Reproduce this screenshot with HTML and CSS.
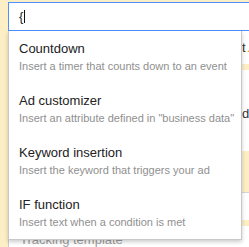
FILE: index.html
```html
<!DOCTYPE html>
<html lang="en">
<head>
    <meta charset="UTF-8">
    <meta name="viewport" content="width=device-width, initial-scale=1.0">
    <title>Ad text insert</title>
    <link rel="stylesheet" href="styles.css">
</head>
<body>

    <div class="page">
        <div class="editor">
            <div class="field-input"><span class="typed">{</span><span class="caret"></span></div>

            <!-- form rows partly hidden behind the menu -->
            <div class="row row-headline"><span class="peek">t</span><span class="peek-dot">.</span></div>
            <div class="band"></div>
            <div class="row row-desc"><span class="peek">d.</span></div>
            <div class="band band-tall"></div>
            <div class="row row-path"></div>
            <div class="band"></div>
            <div class="row row-tracking">
                <div class="tracking">Tracking template</div>
            </div>
        </div>

        <ul class="suggest">
            <li class="suggest-item">
                <div class="suggest-title">Countdown</div>
                <div class="suggest-desc">Insert a timer that counts down to an event</div>
            </li>
            <li class="suggest-item">
                <div class="suggest-title">Ad customizer</div>
                <div class="suggest-desc">Insert an attribute defined in "business data"</div>
            </li>
            <li class="suggest-item">
                <div class="suggest-title">Keyword insertion</div>
                <div class="suggest-desc">Insert the keyword that triggers your ad</div>
            </li>
            <li class="suggest-item">
                <div class="suggest-title">IF function</div>
                <div class="suggest-desc">Insert text when a condition is met</div>
            </li>
        </ul>
    </div>

</body>
</html>
```

FILE: styles.css
```css
body {
    margin: 0;
    padding: 0;
    background: #fcefc6;
    font-family: 'Liberation Sans', Arial, sans-serif;
    overflow: hidden;
}
.page {
    position: relative;
    width: 249px;
    height: 247px;
    padding-left: 8px;
    padding-top: 2px;
    box-sizing: border-box;
    overflow: hidden;
}
.editor {
    width: 241px;
    background: #fff;
}
.field-input {
    height: 27px;
    border: 1px solid #4d90fe;
    border-right: none;
    padding-left: 10px;
    display: flex;
    align-items: center;
    font-size: 13px;
    color: #222;
}
.caret {
    display: inline-block;
    width: 1px;
    height: 13px;
    background: #111;
    margin-left: 1px;
}
.row {
    background: #fff;
    font-size: 13px;
    color: #333;
    white-space: nowrap;
}
.row-headline {
    height: 33px;
    padding-top: 9px;
    box-sizing: border-box;
    padding-left: 234px;
    line-height: 16px;
}
.peek-dot {
    color: #e8a000;
    margin-left: 1px;
}
.band {
    height: 6px;
    background: #fcefc6;
}
.band-tall {
    height: 41px;
    border-bottom: 1px solid #d6d6d6;
}
.row-desc {
    height: 81px;
    box-sizing: border-box;
    padding-top: 36px;
    padding-left: 234px;
    line-height: 16px;
}
.row-path {
    height: 27px;
}
.row-tracking {
    height: 40px;
    border-left: 1px solid #ccc;
}
.tracking {
    padding-top: 6px;
    padding-left: 11px;
    line-height: 16px;
    color: #9e9e9e;
}
.suggest {
    position: absolute;
    top: 31px;
    left: 8px;
    width: 234px;
    margin: 0;
    padding: 0;
    list-style: none;
    background: #fff;
    border: 1px solid #c8c8c8;
    border-top: none;
    box-sizing: border-box;
    box-shadow: 0 2px 4px rgba(0, 0, 0, 0.2);
}
.suggest-item {
    height: 52px;
    padding: 9px 10px;
    box-sizing: border-box;
    white-space: nowrap;
}
.suggest-title {
    font-size: 13px;
    line-height: 17px;
    color: #222;
}
.suggest-desc {
    font-size: 11px;
    line-height: 16px;
    margin-top: 1px;
    color: #8f8f8f;
}
```
